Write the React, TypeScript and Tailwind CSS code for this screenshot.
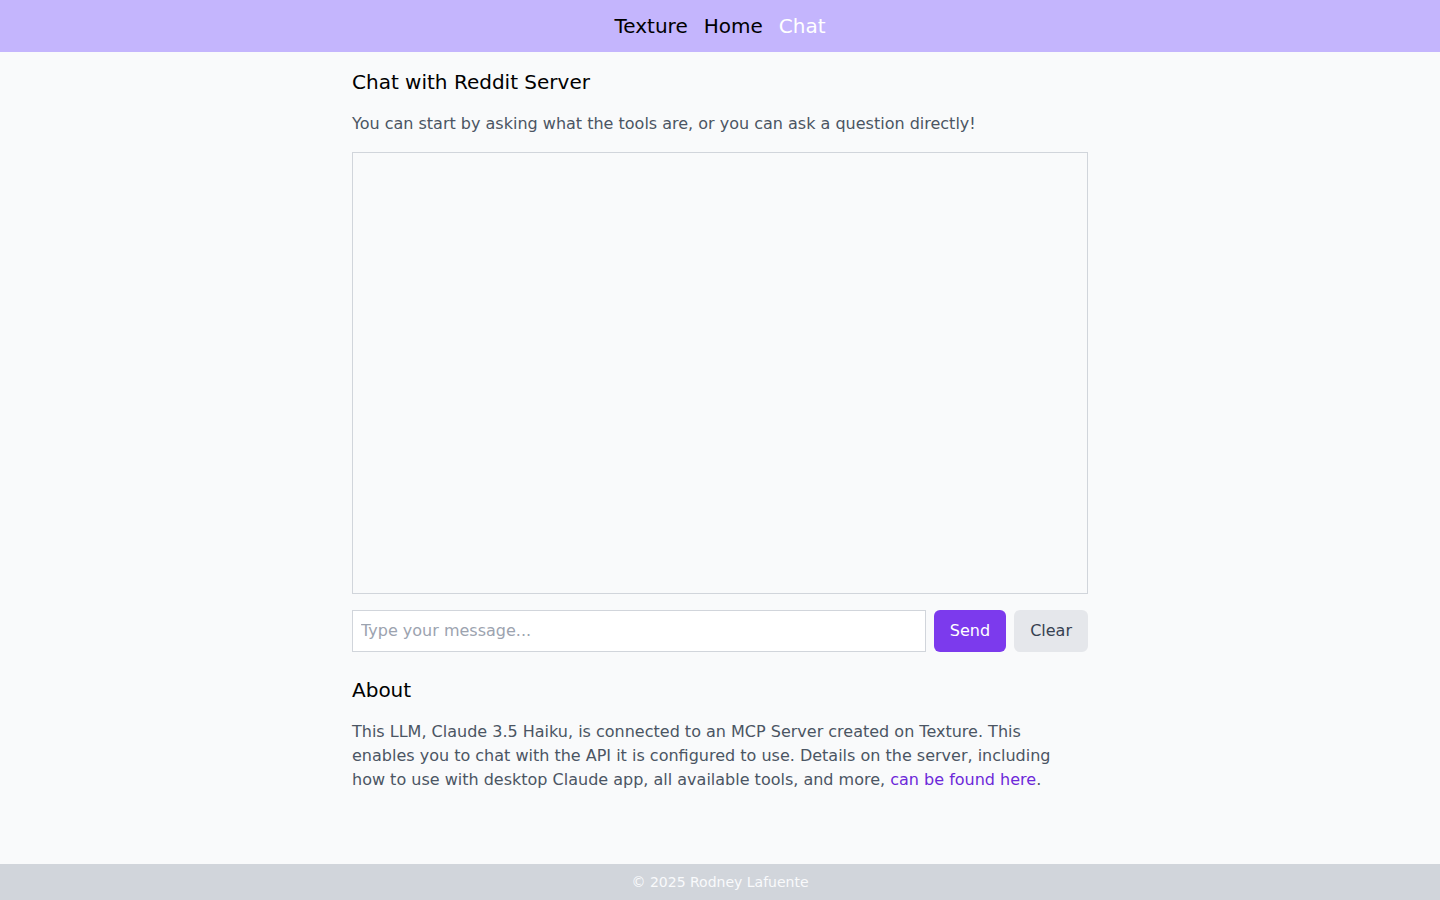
import React, { useState } from 'react';

export default function App() {
  const [message, setMessage] = useState('');

  return (
    <div className="min-h-screen flex flex-col bg-[#f9fafb] font-['DejaVu_Sans',sans-serif]">
      <header className="h-[52px] bg-[#c4b5fd] flex items-center justify-center">
        <nav className="flex items-center gap-4 text-xl">
          <a href="#" className="text-black">Texture</a>
          <a href="#" className="text-black">Home</a>
          <a href="#" className="text-white">Chat</a>
        </nav>
      </header>

      <main className="flex-1 w-full max-w-3xl mx-auto px-4 pt-4">
        <h1 className="text-xl text-black mb-4">Chat with Reddit Server</h1>
        <p className="text-base text-[#4b5563] mb-4">
          You can start by asking what the tools are, or you can ask a question directly!
        </p>

        <div className="h-[442px] border border-[#d1d5db] bg-[#f9fafb] overflow-y-auto"></div>

        <div className="flex gap-2 mt-4">
          <input
            type="text"
            value={message}
            onChange={(e) => setMessage(e.target.value)}
            placeholder="Type your message..."
            className="flex-1 h-[42px] px-2 pb-px bg-white border border-[#d1d5db] text-base text-[#374151] placeholder:text-[#9ca3af] outline-none"
          />
          <button className="h-[42px] px-4 rounded-md bg-[#7c3aed] text-white text-base">Send</button>
          <button className="h-[42px] px-4 rounded-md bg-[#e5e7eb] text-[#374151] text-base">Clear</button>
        </div>

        <h2 className="text-xl text-black mt-6 mb-4">About</h2>
        <p className="text-base leading-6 text-[#4b5563]">
          This LLM, Claude 3.5 Haiku, is connected to an MCP Server created on Texture. This enables you to chat with
          the API it is configured to use. Details on the server, including how to use with desktop Claude app, all
          available tools, and more, <a href="#" className="text-[#6d28d9]">can be found here</a>.
        </p>
      </main>

      <footer className="h-9 bg-[#d1d5db] flex items-center justify-center text-sm text-[#f9fafb]">
        © 2025 Rodney Lafuente
      </footer>
    </div>
  );
}
